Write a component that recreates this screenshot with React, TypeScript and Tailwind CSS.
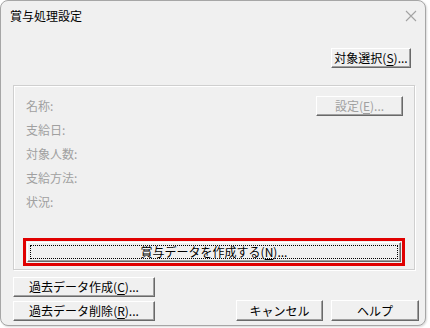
// Bonus processing settings dialog (賞与処理設定).

type BtnProps = {
  label: string;
  mnemonic?: string;
  className?: string;
  disabled?: boolean;
};

// Classic 3D push button: light top/left edge, dark bottom/right edge.
function Btn({ label, mnemonic, className = "", disabled = false }: BtnProps) {
  return (
    <div
      className={
        "flex items-center justify-center border border-t-white border-l-white border-r-[#696969] border-b-[#696969] bg-[#f0f0f0] shadow-[inset_-1px_-1px_0_#a0a0a0] text-[12px] leading-none " +
        (disabled ? "text-[#a0a0a0] " : "text-black ") +
        className
      }
    >
      <span>
        {label}
        {mnemonic && (
          <>
            (<span className="underline underline-offset-2">{mnemonic}</span>)...
          </>
        )}
      </span>
    </div>
  );
}

const fields = ["名称:", "支給日:", "対象人数:", "支給方法:", "状況:"];

export default function App() {
  return (
    <div className="h-[328px] w-[430px] bg-white font-['Noto_Sans_CJK_JP',sans-serif]">
      <div className="flex h-[326px] w-[426px] flex-col overflow-hidden rounded-[8px] border border-[#a6a6a6] bg-[#f0f0f0] shadow-[1px_1px_2px_rgba(0,0,0,0.15)]">
        {/* Title bar */}
        <div className="flex h-[29px] shrink-0 items-center justify-between pl-[9px] pr-[7px]">
          <span className="text-[12px] text-black">賞与処理設定</span>
          <svg width="12" height="12" viewBox="0 0 12 12" className="mr-[1px]">
            <path d="M1 1 L11 11 M11 1 L1 11" stroke="#a3a3a3" strokeWidth="1.1" />
          </svg>
        </div>

        {/* Target select */}
        <div className="mt-[18px] flex justify-end pr-[14px]">
          <Btn label="対象選択" mnemonic="S" className="h-[20px] w-[80px]" />
        </div>

        {/* Group box */}
        <div className="ml-[12px] mt-[17px] flex h-[185px] w-[402px] flex-col border border-[#cfcfcf] px-[9px] pb-[3px] pt-[8px] shadow-[inset_1px_1px_0_#fff,1px_1px_0_#fff]">
          <div className="flex flex-col pl-[3px] text-[12px] text-[#a0a0a0]">
            {fields.map((f, i) => (
              <div key={f} className="flex h-[24px] items-center justify-between">
                <span>{f}</span>
                {i === 0 && (
                  <Btn label="設定" mnemonic="E" disabled className="mr-[2px] h-[20px] w-[87px]" />
                )}
              </div>
            ))}
          </div>

          <div className="mt-auto border-[3px] border-[#e00000] p-[1px]">
            <div className="flex h-[20px] items-center justify-center border border-t-white border-l-white border-r-[#696969] border-b-[#696969] bg-[#f0f0f0] p-[2px] shadow-[inset_-1px_-1px_0_#a0a0a0]">
              <div className="flex h-full w-full items-center justify-center border border-dotted border-black text-[12px] leading-none text-black">
                <span>
                  賞与データを作成する(<span className="underline underline-offset-2">N</span>)...
                </span>
              </div>
            </div>
          </div>
        </div>

        {/* Bottom buttons */}
        <div className="ml-[12px] mt-[7px] flex w-[406px] items-end justify-between">
          <div className="flex flex-col gap-[4px]">
            <Btn label="過去データ作成" mnemonic="C" className="h-[20px] w-[142px]" />
            <Btn label="過去データ削除" mnemonic="R" className="h-[20px] w-[142px]" />
          </div>
          <div className="flex gap-[8px]">
            <Btn label="キャンセル" className="h-[21px] w-[87px]" />
            <Btn label="ヘルプ" className="h-[21px] w-[88px]" />
          </div>
        </div>
      </div>
    </div>
  );
}
